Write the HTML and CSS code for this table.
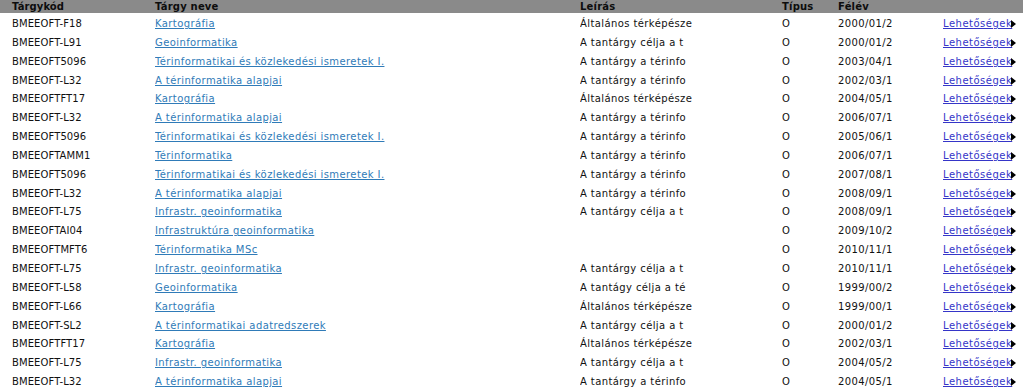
FILE: index.html
```html
<!DOCTYPE html>
<html lang="hu">
<head>
<meta charset="utf-8">
<title>Tárgyak</title>
<link rel="stylesheet" href="styles.css">
</head>
<body>
<table class="subjects">
  <colgroup>
    <col class="c-code"><col class="c-name"><col class="c-desc"><col class="c-type"><col class="c-sem"><col class="c-opt">
  </colgroup>
  <thead>
    <tr><th>Tárgykód</th><th>Tárgy neve</th><th>Leírás</th><th>Típus</th><th>Félév</th><th></th></tr>
  </thead>
  <tbody>
    <tr><td>BMEEOFT-F18</td><td><a class="subj" href="#">Kartográfia</a></td><td>Általános térképésze</td><td>O</td><td>2000/01/2</td><td><a class="opt" href="#">Lehetőségek</a></td></tr>
    <tr><td>BMEEOFT-L91</td><td><a class="subj" href="#">Geoinformatika</a></td><td>A tantárgy célja a t</td><td>O</td><td>2000/01/2</td><td><a class="opt" href="#">Lehetőségek</a></td></tr>
    <tr><td>BMEEOFT5096</td><td><a class="subj" href="#">Térinformatikai és közlekedési ismeretek I.</a></td><td>A tantárgy a térinfo</td><td>O</td><td>2003/04/1</td><td><a class="opt" href="#">Lehetőségek</a></td></tr>
    <tr><td>BMEEOFT-L32</td><td><a class="subj" href="#">A térinformatika alapjai</a></td><td>A tantárgy a térinfo</td><td>O</td><td>2002/03/1</td><td><a class="opt" href="#">Lehetőségek</a></td></tr>
    <tr><td>BMEEOFTFT17</td><td><a class="subj" href="#">Kartográfia</a></td><td>Általános térképésze</td><td>O</td><td>2004/05/1</td><td><a class="opt" href="#">Lehetőségek</a></td></tr>
    <tr><td>BMEEOFT-L32</td><td><a class="subj" href="#">A térinformatika alapjai</a></td><td>A tantárgy a térinfo</td><td>O</td><td>2006/07/1</td><td><a class="opt" href="#">Lehetőségek</a></td></tr>
    <tr><td>BMEEOFT5096</td><td><a class="subj" href="#">Térinformatikai és közlekedési ismeretek I.</a></td><td>A tantárgy a térinfo</td><td>O</td><td>2005/06/1</td><td><a class="opt" href="#">Lehetőségek</a></td></tr>
    <tr><td>BMEEOFTAMM1</td><td><a class="subj" href="#">Térinformatika</a></td><td>A tantárgy a térinfo</td><td>O</td><td>2006/07/1</td><td><a class="opt" href="#">Lehetőségek</a></td></tr>
    <tr><td>BMEEOFT5096</td><td><a class="subj" href="#">Térinformatikai és közlekedési ismeretek I.</a></td><td>A tantárgy a térinfo</td><td>O</td><td>2007/08/1</td><td><a class="opt" href="#">Lehetőségek</a></td></tr>
    <tr><td>BMEEOFT-L32</td><td><a class="subj" href="#">A térinformatika alapjai</a></td><td>A tantárgy a térinfo</td><td>O</td><td>2008/09/1</td><td><a class="opt" href="#">Lehetőségek</a></td></tr>
    <tr><td>BMEEOFT-L75</td><td><a class="subj" href="#">Infrastr. geoinformatika</a></td><td>A tantárgy célja a t</td><td>O</td><td>2008/09/1</td><td><a class="opt" href="#">Lehetőségek</a></td></tr>
    <tr><td>BMEEOFTAI04</td><td><a class="subj" href="#">Infrastruktúra geoinformatika</a></td><td></td><td>O</td><td>2009/10/2</td><td><a class="opt" href="#">Lehetőségek</a></td></tr>
    <tr><td>BMEEOFTMFT6</td><td><a class="subj" href="#">Térinformatika MSc</a></td><td></td><td>O</td><td>2010/11/1</td><td><a class="opt" href="#">Lehetőségek</a></td></tr>
    <tr><td>BMEEOFT-L75</td><td><a class="subj" href="#">Infrastr. geoinformatika</a></td><td>A tantárgy célja a t</td><td>O</td><td>2010/11/1</td><td><a class="opt" href="#">Lehetőségek</a></td></tr>
    <tr><td>BMEEOFT-L58</td><td><a class="subj" href="#">Geoinformatika</a></td><td>A tantágy célja a té</td><td>O</td><td>1999/00/2</td><td><a class="opt" href="#">Lehetőségek</a></td></tr>
    <tr><td>BMEEOFT-L66</td><td><a class="subj" href="#">Kartográfia</a></td><td>Általános térképésze</td><td>O</td><td>1999/00/1</td><td><a class="opt" href="#">Lehetőségek</a></td></tr>
    <tr><td>BMEEOFT-SL2</td><td><a class="subj" href="#">A térinformatikai adatredszerek</a></td><td>A tantárgy célja a t</td><td>O</td><td>2000/01/2</td><td><a class="opt" href="#">Lehetőségek</a></td></tr>
    <tr><td>BMEEOFTFT17</td><td><a class="subj" href="#">Kartográfia</a></td><td>Általános térképésze</td><td>O</td><td>2002/03/1</td><td><a class="opt" href="#">Lehetőségek</a></td></tr>
    <tr><td>BMEEOFT-L75</td><td><a class="subj" href="#">Infrastr. geoinformatika</a></td><td>A tantárgy célja a t</td><td>O</td><td>2004/05/2</td><td><a class="opt" href="#">Lehetőségek</a></td></tr>
    <tr><td>BMEEOFT-L32</td><td><a class="subj" href="#">A térinformatika alapjai</a></td><td>A tantárgy a térinfo</td><td>O</td><td>2004/05/1</td><td><a class="opt" href="#">Lehetőségek</a></td></tr>
  </tbody>
</table>
</body>
</html>
```

FILE: styles.css
```css
html, body {
  margin: 0;
  padding: 0;
  background: #ffffff;
}

.subjects {
  width: 1023px;
  table-layout: fixed;
  border-collapse: collapse;
  font-family: "DejaVu Sans", Verdana, sans-serif;
  font-size: 10px;
  letter-spacing: 0.4px;
  color: #111111;
}

.c-code { width: 155px; }
.c-name { width: 425px; }
.c-desc { width: 202px; }
.c-type { width: 56px; }
.c-sem  { width: 105px; }
.c-opt  { width: 80px; }

.subjects thead tr {
  background: #8a8a8a;
}

.subjects th {
  height: 13px;
  padding: 0;
  text-align: left;
  font-weight: bold;
  letter-spacing: 0.2px;
  color: #0d0d0d;
  line-height: 13px;
  vertical-align: middle;
}

.subjects th:first-child,
.subjects td:first-child {
  padding-left: 12px;
  letter-spacing: 0.1px;
}

.subjects tbody tr:first-child td {
  padding-top: 2px;
}

.subjects td {
  height: 18.85px;
  padding: 0;
  line-height: 18.85px;
  white-space: nowrap;
  overflow: hidden;
  vertical-align: middle;
}

.subj {
  color: #2f7bb8;
  text-decoration: underline;
}

.opt {
  color: #3535c8;
  text-decoration: underline;
  letter-spacing: 0.5px;
}

.opt::after {
  content: "";
  display: inline-block;
  width: 0;
  height: 0;
  border-top: 4px solid transparent;
  border-bottom: 4px solid transparent;
  border-left: 5px solid #000000;
  vertical-align: -1px;
  margin-left: -1px;
}
```
